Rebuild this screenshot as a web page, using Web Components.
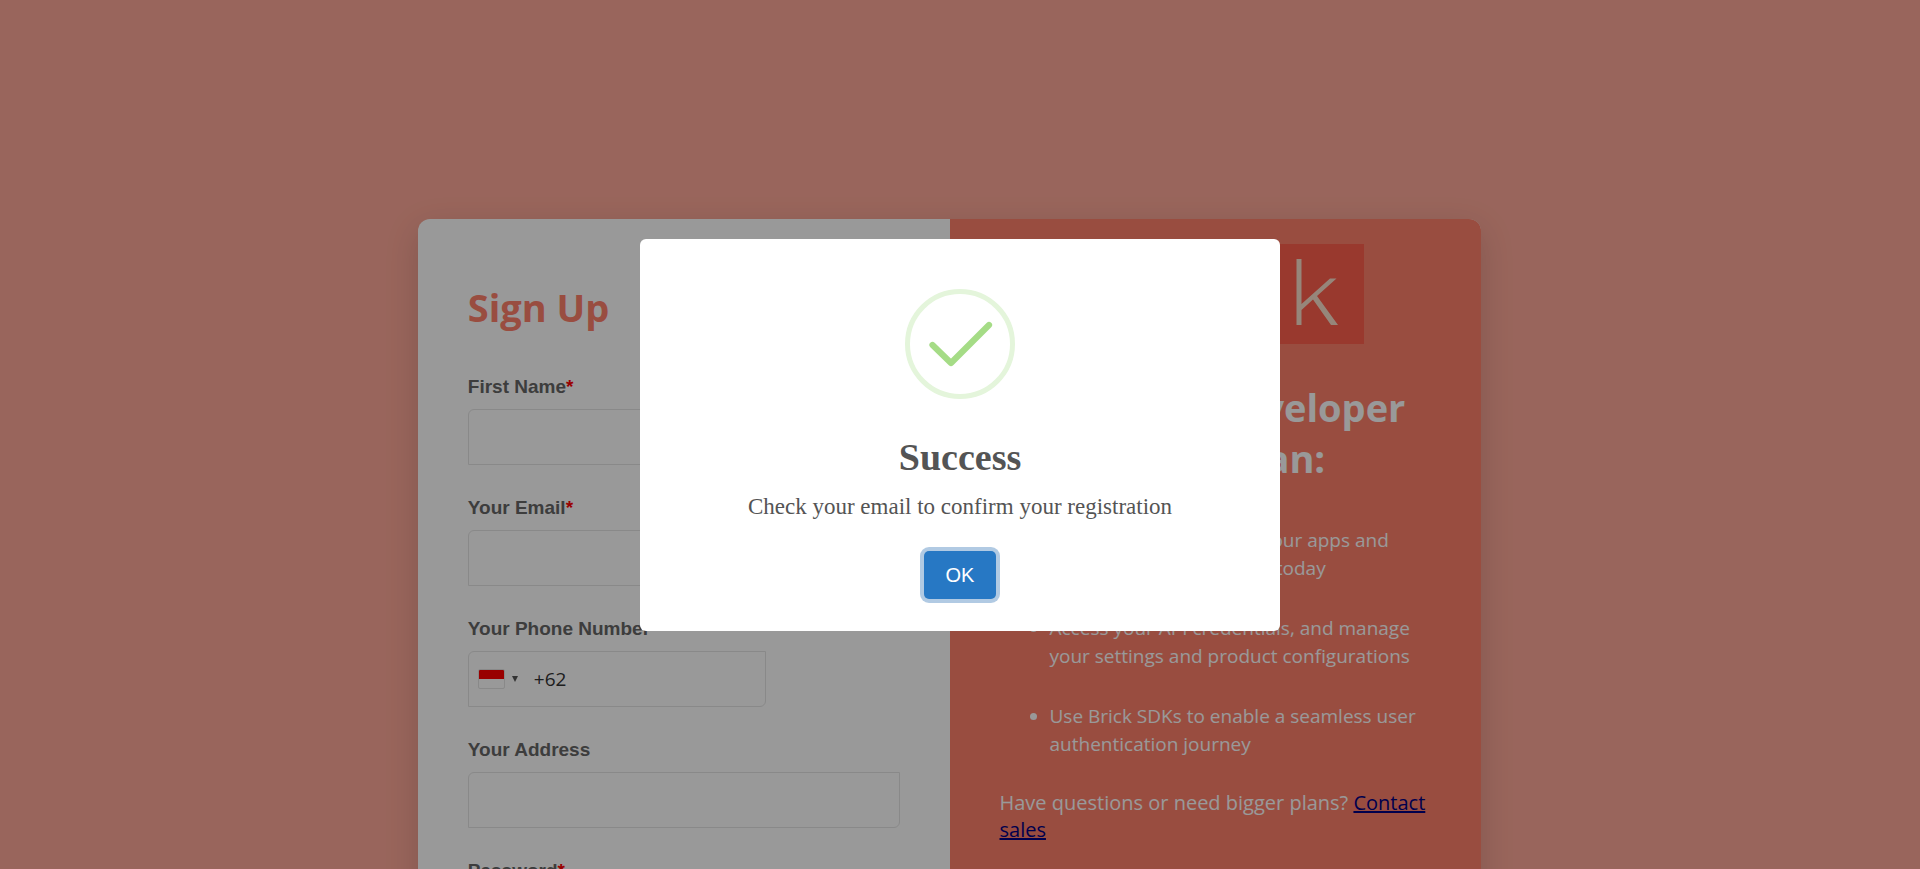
<!DOCTYPE html>
<html lang="en">
<head>
<meta charset="utf-8">
<title>Brick – Sign Up</title>
<style>
  body {
    margin: 0;
    padding-right: 21px;
    height: 100vh;
    overflow: hidden;
    background: #ffa999;
    font-family: "Open Sans", sans-serif;
  }
</style>
</head>
<body>
<signup-card>
  <signup-form slot="form">
    <form-field name="first-name" label="First Name" required></form-field>
    <form-field name="email" type="email" label="Your Email" required></form-field>
    <phone-field label="Your Phone Number" value="+62"></phone-field>
    <form-field name="address" label="Your Address"></form-field>
    <form-field name="password" type="password" label="Password" required></form-field>
  </signup-form>
  <plan-panel slot="plan"></plan-panel>
</signup-card>
<alert-dialog heading="Success" confirm="OK">Check your email to confirm your registration</alert-dialog>

<script>
class BaseElement extends HTMLElement {
  connectedCallback() {
    if (this.shadowRoot) return;
    this.attachShadow({ mode: "open" }).innerHTML =
      `<style>*, *::before { box-sizing: border-box; } ${this.styles()}</style>${this.markup()}`;
  }
}

const fieldStyles = `
  :host { display: block; margin-bottom: 31px; }
  label {
    display: block; margin-bottom: 10px; color: #666;
    font: bold 19px/24px "Liberation Sans", Arial, sans-serif;
  }
  .required { color: #f00; }
  input {
    display: block; width: 100%; height: 56px; padding: 0 20px;
    border: 1px solid #e5e5e5; border-radius: 6px 0; outline: none;
    background: #fff; color: #333;
    font: 19px/24px "Open Sans", sans-serif;
  }`;

customElements.define("signup-card", class extends BaseElement {
  styles() {
    return `
      :host {
        display: grid; grid-template-columns: 1fr 1fr;
        width: 56%; margin: 219px auto 80px; border-radius: 12px;
        background: #fff; box-shadow: 0 10px 34px rgba(0, 0, 0, .15);
      }
      ::slotted([slot="plan"]) { border-radius: 0 12px 12px 0; }`;
  }
  markup() { return `<slot name="form"></slot><slot name="plan"></slot>`; }
});

customElements.define("signup-form", class extends BaseElement {
  styles() {
    return `
      :host { display: block; padding: 62px 50px 50px; }
      h1 { margin: 0 0 42px; color: #ff816c; font: bold 38px/52px "Open Sans", sans-serif; }`;
  }
  markup() { return `<h1>Sign Up</h1><form><slot></slot></form>`; }
});

customElements.define("form-field", class extends BaseElement {
  styles() { return fieldStyles; }
  markup() {
    const star = this.hasAttribute("required") ? `<span class="required">*</span>` : "";
    return `<label for="field">${this.getAttribute("label")}${star}</label>
      <input id="field" name="${this.getAttribute("name")}" type="${this.getAttribute("type") || "text"}">`;
  }
});

customElements.define("phone-field", class extends BaseElement {
  styles() {
    return fieldStyles + `
      .row { position: relative; max-width: 298px; }
      input { padding-left: 65px; }
      button {
        position: absolute; inset: 0 auto 0 0; display: flex; align-items: center; gap: 7px;
        padding: 0 10px; border: 0; background: none;
      }
      .flag {
        width: 27px; height: 20px; border: 1px solid #e5e5e5; border-radius: 2px;
        background: linear-gradient(#f00 50%, #fff 50%);
      }
      .caret { border: 3px solid transparent; border-top: 6px solid #555; border-bottom: 0; }`;
  }
  markup() {
    return `<label for="field">${this.getAttribute("label")}</label>
      <div class="row">
        <input id="field" type="tel" value="${this.getAttribute("value")}">
        <button type="button" aria-label="Country"><span class="flag"></span><span class="caret"></span></button>
      </div>`;
  }
});

customElements.define("plan-panel", class extends BaseElement {
  styles() {
    return `
      :host { display: block; padding: 25px 50px 50px; background: #ff816c; color: #fff; }
      svg { display: block; width: 298px; height: 100px; margin: 0 auto 38px; }
      h2 { margin: 0 0 42px; text-align: center; font: bold 38px/51px "Open Sans", sans-serif; }
      ul { display: grid; gap: 32px; margin: 0 0 31px; padding: 0 0 0 50px; font-size: 19px; line-height: 28px; }
      p { margin: 0; font-size: 20px; line-height: 27px; }
      a { color: #000080; }`;
  }
  markup() {
    return `
      <svg viewBox="0 0 298 100" role="img" aria-label="Brick">
        <rect width="298" height="100" fill="#ff5f4d"/>
        <path fill="#fae0cc" d="M230.5 15H235.5V60L264 34.5H270.5L251 52L272 81H265L247 55.5L235.5 66V81H230.5Z"/>
      </svg>
      <h2>What's in Developer<br>Public Plan:</h2>
      <ul>
        <li>Get started to integrate your apps and<br>launch your first API calls today</li>
        <li>Access your API credentials, and manage your settings and product configurations</li>
        <li>Use Brick SDKs to enable a seamless user authentication journey</li>
      </ul>
      <p>Have questions or need bigger plans? <a href="#contact">Contact sales</a></p>`;
  }
});

customElements.define("alert-dialog", class extends BaseElement {
  styles() {
    return `
      :host {
        position: fixed; inset: 0; display: flex; align-items: center; justify-content: center;
        background: rgba(0, 0, 0, .4);
      }
      section {
        display: flex; flex-direction: column; align-items: center;
        width: 640px; max-width: 100%; padding: 50px 20px 32px; border-radius: 6px;
        background: #fff; color: #545454; text-align: center;
        font: 23px/30px "Liberation Serif", "Times New Roman", serif;
      }
      svg { width: 110px; height: 110px; margin-bottom: 36px; }
      h2 { margin: 0 0 13px; font-size: 38px; line-height: 44px; }
      p { margin: 0 0 29px; }
      button {
        min-width: 72px; height: 48px; padding: 0 20px; border: 0; border-radius: 5px;
        background: #2778c4; box-shadow: 0 0 0 4px rgba(100, 150, 200, .5); color: #fff;
        font: 20px/24px "Liberation Sans", Arial, sans-serif;
      }`;
  }
  markup() {
    return `
      <section role="dialog" aria-modal="true" aria-labelledby="title">
        <svg viewBox="0 0 110 110" fill="none" aria-hidden="true">
          <circle cx="55" cy="55" r="52.5" stroke="#e4f5db" stroke-width="5"/>
          <path d="M27.5 56L46 74L84 36" stroke="#a5dc86" stroke-width="6.2" stroke-linecap="round" stroke-linejoin="round"/>
        </svg>
        <h2 id="title">${this.getAttribute("heading")}</h2>
        <p><slot></slot></p>
        <button type="button">${this.getAttribute("confirm")}</button>
      </section>`;
  }
});
</script>
</body>
</html>
